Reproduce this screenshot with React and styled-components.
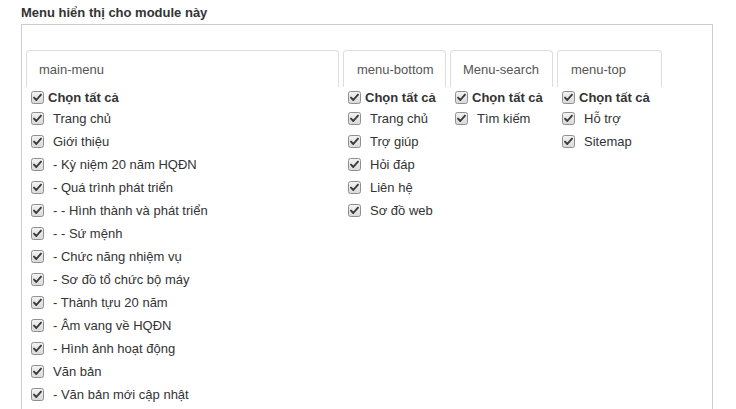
import styled, { createGlobalStyle } from "styled-components";

const GlobalStyle = createGlobalStyle`
  html, body {
    margin: 0;
    padding: 0;
    background: #fff;
    overflow: hidden;
  }
  body {
    font-family: "Liberation Sans", Arial, sans-serif;
    font-size: 13px;
    color: #333;
  }
`;

const Page = styled.div`
  height: 409px;
  box-sizing: border-box;
  padding: 5px 22px 0 21px;
  display: flex;
  flex-direction: column;
`;

const Heading = styled.div`
  font-weight: 700;
  font-size: 13px;
  line-height: 15px;
  color: #333;
  margin-bottom: 4px;
`;

const Box = styled.div`
  flex: 1;
  width: 692px;
  border: 1px solid #ccc;
  border-bottom: none;
  padding: 25px 4px 0 4px;
  box-sizing: border-box;
  display: grid;
  grid-template-columns: 313px 103px 103px 105px;
  column-gap: 4px;
  align-items: start;
`;

const Column = styled.div`
  display: flex;
  flex-direction: column;
`;

const Tab = styled.div`
  height: 37px;
  box-sizing: border-box;
  border: 1px solid #ddd;
  border-bottom: none;
  border-radius: 4px 4px 0 0;
  padding-left: ${(p) => p.$pad || 12}px;
  display: flex;
  align-items: center;
  color: #555;
  white-space: nowrap;
`;

const List = styled.div`
  display: flex;
  flex-direction: column;
  padding-left: 5px;
`;

const Row = styled.label`
  display: flex;
  align-items: center;
  height: ${(p) => (p.$all ? 20 : 23)}px;
  font-weight: ${(p) => (p.$all ? 700 : 400)};
  white-space: nowrap;
`;

const Label = styled.span`
  margin-left: ${(p) => (p.$all ? 4 : 9)}px;
`;

const Box13 = styled.svg`
  flex: none;
  width: 13px;
  height: 13px;
`;

const Check = () => (
  <Box13 viewBox="0 0 13 13">
    <defs>
      <linearGradient id="cbg" x1="0" y1="0" x2="0" y2="1">
        <stop offset="0" stopColor="#f4f4f4" />
        <stop offset="1" stopColor="#d8d8d8" />
      </linearGradient>
    </defs>
    <rect x="0.5" y="0.5" width="12" height="12" rx="2" fill="url(#cbg)" stroke="#8f8f8f" />
    <path d="M3 6.6 L5.3 9 L10 3.6" fill="none" stroke="#3a3a3a" strokeWidth="1.9" strokeLinecap="round" strokeLinejoin="round" />
  </Box13>
);

const columns = [
  {
    name: "main-menu",
    items: [
      "Trang chủ",
      "Giới thiệu",
      "- Kỳ niệm 20 năm HQĐN",
      "- Quá trình phát triển",
      "- - Hình thành và phát triển",
      "- - Sứ mệnh",
      "- Chức năng nhiệm vụ",
      "- Sơ đồ tổ chức bộ máy",
      "- Thành tựu 20 năm",
      "- Âm vang về HQĐN",
      "- Hình ảnh hoạt động",
      "Văn bản",
      "- Văn bản mới cập nhật",
    ],
  },
  {
    name: "menu-bottom",
    pad: 13,
    items: ["Trang chủ", "Trợ giúp", "Hỏi đáp", "Liên hệ", "Sơ đồ web"],
  },
  { name: "Menu-search", pad: 12, items: ["Tìm kiếm"] },
  { name: "menu-top", pad: 13, items: ["Hỗ trợ", "Sitemap"] },
];

export default function App() {
  return (
    <Page>
      <GlobalStyle />
      <Heading>Menu hiển thị cho module này</Heading>
      <Box>
        {columns.map((col) => (
          <Column key={col.name}>
            <Tab $pad={col.pad}>{col.name}</Tab>
            <List>
              <Row $all>
                <Check />
                <Label $all>Chọn tất cả</Label>
              </Row>
              {col.items.map((item) => (
                <Row key={item}>
                  <Check />
                  <Label>{item}</Label>
                </Row>
              ))}
            </List>
          </Column>
        ))}
      </Box>
    </Page>
  );
}
